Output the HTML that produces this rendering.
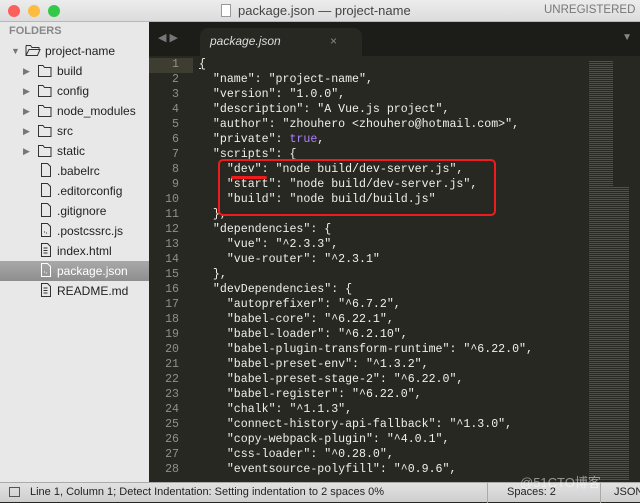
<!DOCTYPE html><html><head><style>
*{margin:0;padding:0;box-sizing:border-box}
body{width:640px;height:502px;overflow:hidden;background:#272822;font-family:"Liberation Sans",sans-serif;position:relative}
#title{position:absolute;left:0;top:0;width:640px;height:22px;background:linear-gradient(#ececec,#dcdcdc);border-bottom:1px solid #b8b8b8}
.dot{position:absolute;top:5px;width:12px;height:12px;border-radius:50%}
#side{position:absolute;left:0;top:22px;width:149px;height:460px;background:#e8e8e8}
.it{position:absolute;font-size:12px;color:#222;height:20px;line-height:20px;white-space:nowrap}
.ic{position:absolute}
.tri{position:absolute;font-size:9px;color:#777}
#tabbar{position:absolute;left:149px;top:22px;width:491px;height:34px;background:#1c1d19}
#tab{position:absolute;left:200px;top:28px;width:162px;height:28px;background:#272822;border-radius:8px 8px 0 0}
#code{position:absolute;left:149px;top:58px;font-family:"Liberation Mono",monospace;font-size:11.6px;color:#f0f0ea}
.ln{position:absolute;left:0;width:30px;text-align:right;color:#8f908a}
.cl{position:absolute;left:50px;white-space:pre}
#status{position:absolute;left:0;top:482px;width:640px;height:20px;background:linear-gradient(#e2e2e2,#cfcfcf);border-top:1px solid #aaa;font-size:11px;color:#222;line-height:19px}
</style></head><body>
<div id="title">
<div class="dot" style="left:8px;background:#fc605c"></div>
<div class="dot" style="left:28px;background:#fdbc40"></div>
<div class="dot" style="left:48px;background:#34c84a"></div>
<div style="position:absolute;left:221px;top:4px;width:10px;height:13px;border:1px solid #999;background:#fff"></div>
<div style="position:absolute;left:238px;top:3px;font-size:13px;color:#444">package.json — project-name</div>
<div style="position:absolute;left:544px;top:4px;font-size:11.5px;color:#777">UNREGISTERED</div>
</div>
<div id="side"></div>
<div style="position:absolute;left:0;top:261px;width:149px;height:20px;background:linear-gradient(#a9a9a9,#8e8e8e)"></div>
<div style="position:absolute;left:0;top:0;width:149px">
<div class="it" style="left:9px;top:21px;font-size:11px;font-weight:bold;color:#888">FOLDERS</div>
<div class="tri" style="left:11px;top:46px">▼</div>
<svg class="ic" style="left:25px;top:44px" width="16" height="13"><path d="M1 1.5h4.5l1.5 2h7v2M1 1.5v10h11.5l2.5-6H4l-3 6" fill="none" stroke="#333"/></svg>
<div class="it" style="left:45px;top:41px">project-name</div>
<div class="tri" style="left:23px;top:66px">▶</div>
<div class="tri" style="left:23px;top:86px">▶</div>
<div class="tri" style="left:23px;top:106px">▶</div>
<div class="tri" style="left:23px;top:126px">▶</div>
<div class="tri" style="left:23px;top:146px">▶</div>
<svg class="ic" style="left:37px;top:64px" width="16" height="100"><g fill="none" stroke="#333"><path d="M1.5 1.5h4.5l1.5 2h6.5v9h-12.5z"/><path transform="translate(0,20)" d="M1.5 1.5h4.5l1.5 2h6.5v9h-12.5z"/><path transform="translate(0,40)" d="M1.5 1.5h4.5l1.5 2h6.5v9h-12.5z"/><path transform="translate(0,60)" d="M1.5 1.5h4.5l1.5 2h6.5v9h-12.5z"/><path transform="translate(0,80)" d="M1.5 1.5h4.5l1.5 2h6.5v9h-12.5z"/></g></svg>
<div class="it" style="left:57px;top:61px">build</div>
<div class="it" style="left:57px;top:81px">config</div>
<div class="it" style="left:57px;top:101px">node_modules</div>
<div class="it" style="left:57px;top:121px">src</div>
<div class="it" style="left:57px;top:141px">static</div>
<svg class="ic" style="left:40px;top:163px" width="12" height="140"><g fill="none" stroke="#333">
<path d="M1.5 .5h6l3 3v10h-9z"/><path transform="translate(0,20)" d="M1.5 .5h6l3 3v10h-9z"/><path transform="translate(0,40)" d="M1.5 .5h6l3 3v10h-9z"/><path transform="translate(0,60)" d="M1.5 .5h6l3 3v10h-9zM4 9h1M6 10h1"/><path transform="translate(0,80)" d="M1.5 .5h6l3 3v10h-9zM3.5 5h4M3.5 7.5h4M3.5 10h4"/><path transform="translate(0,100)" d="M1.5 .5h6l3 3v10h-9zM4 9h1M6 10h1" stroke="#fff"/><path transform="translate(0,120)" d="M1.5 .5h6l3 3v10h-9zM3.5 5h4M3.5 7.5h4M3.5 10h4"/></g></svg>
<div class="it" style="left:57px;top:161px">.babelrc</div>
<div class="it" style="left:57px;top:181px">.editorconfig</div>
<div class="it" style="left:57px;top:201px">.gitignore</div>
<div class="it" style="left:57px;top:221px">.postcssrc.js</div>
<div class="it" style="left:57px;top:241px">index.html</div>
<div class="it" style="left:57px;top:261px;color:#fff">package.json</div>
<div class="it" style="left:57px;top:281px">README.md</div>
</div>
<div id="tabbar"><div style="position:absolute;left:9px;top:9px;color:#777;font-size:11px">◀ ▶</div><div style="position:absolute;right:8px;top:10px;color:#888;font-size:10px">▼</div></div>
<div id="tab"><div style="position:absolute;left:10px;top:6px;font-style:italic;font-size:12px;color:#ddd">package.json</div><div style="position:absolute;left:130px;top:6px;font-size:12px;color:#888">×</div></div>
<div style="position:absolute;left:149px;top:58px;width:44px;height:15px;background:#3e3d32"></div>
<div id="code">
<div class="ln" style="top:0">1</div><div class="cl" style="top:0;text-decoration:underline">{</div>
<div class="ln" style="top:15px">2</div><div class="cl" style="top:15px">  "name": "project-name",</div>
<div class="ln" style="top:30px">3</div><div class="cl" style="top:30px">  "version": "1.0.0",</div>
<div class="ln" style="top:45px">4</div><div class="cl" style="top:45px">  "description": "A Vue.js project",</div>
<div class="ln" style="top:60px">5</div><div class="cl" style="top:60px">  "author": "zhouhero &lt;zhouhero@hotmail.com&gt;",</div>
<div class="ln" style="top:75px">6</div><div class="cl" style="top:75px">  "private": <span style="color:#ae81ff">true</span>,</div>
<div class="ln" style="top:90px">7</div><div class="cl" style="top:90px">  "scripts": {</div>
<div class="ln" style="top:105px">8</div><div class="cl" style="top:105px">    "dev": "node build/dev-server.js",</div>
<div class="ln" style="top:120px">9</div><div class="cl" style="top:120px">    "start": "node build/dev-server.js",</div>
<div class="ln" style="top:135px">10</div><div class="cl" style="top:135px">    "build": "node build/build.js"</div>
<div class="ln" style="top:150px">11</div><div class="cl" style="top:150px">  },</div>
<div class="ln" style="top:165px">12</div><div class="cl" style="top:165px">  "dependencies": {</div>
<div class="ln" style="top:180px">13</div><div class="cl" style="top:180px">    "vue": "^2.3.3",</div>
<div class="ln" style="top:195px">14</div><div class="cl" style="top:195px">    "vue-router": "^2.3.1"</div>
<div class="ln" style="top:210px">15</div><div class="cl" style="top:210px">  },</div>
<div class="ln" style="top:225px">16</div><div class="cl" style="top:225px">  "devDependencies": {</div>
<div class="ln" style="top:240px">17</div><div class="cl" style="top:240px">    "autoprefixer": "^6.7.2",</div>
<div class="ln" style="top:255px">18</div><div class="cl" style="top:255px">    "babel-core": "^6.22.1",</div>
<div class="ln" style="top:270px">19</div><div class="cl" style="top:270px">    "babel-loader": "^6.2.10",</div>
<div class="ln" style="top:285px">20</div><div class="cl" style="top:285px">    "babel-plugin-transform-runtime": "^6.22.0",</div>
<div class="ln" style="top:300px">21</div><div class="cl" style="top:300px">    "babel-preset-env": "^1.3.2",</div>
<div class="ln" style="top:315px">22</div><div class="cl" style="top:315px">    "babel-preset-stage-2": "^6.22.0",</div>
<div class="ln" style="top:330px">23</div><div class="cl" style="top:330px">    "babel-register": "^6.22.0",</div>
<div class="ln" style="top:345px">24</div><div class="cl" style="top:345px">    "chalk": "^1.1.3",</div>
<div class="ln" style="top:360px">25</div><div class="cl" style="top:360px">    "connect-history-api-fallback": "^1.3.0",</div>
<div class="ln" style="top:375px">26</div><div class="cl" style="top:375px">    "copy-webpack-plugin": "^4.0.1",</div>
<div class="ln" style="top:390px">27</div><div class="cl" style="top:390px">    "css-loader": "^0.28.0",</div>
<div class="ln" style="top:405px">28</div><div class="cl" style="top:405px">    "eventsource-polyfill": "^0.9.6",</div>
</div>
<div style="position:absolute;left:589px;top:60px;width:40px;height:420px;background:repeating-linear-gradient(#272822 0,#272822 1px,#6a6a64 1px,#6a6a64 2px);opacity:.6;clip-path:polygon(0 0,60% 0,60% 30%,100% 30%,100% 100%,0 100%)"></div>
<div style="position:absolute;left:218px;top:159px;width:278px;height:57px;border:2.5px solid #ee1c1c;border-radius:5px"></div>
<div style="position:absolute;left:231px;top:176px;width:36px;height:3px;background:#ee1c1c;border-radius:2px"></div>
<div id="status">
<div style="position:absolute;left:9px;top:4px;width:11px;height:10px;border:1px solid #555"></div>
<div style="position:absolute;left:30px;top:0">Line 1, Column 1; Detect Indentation: Setting indentation to 2 spaces 0%</div>
<div style="position:absolute;left:487px;top:0;width:1px;height:20px;background:#aaa"></div>
<div style="position:absolute;left:507px;top:0">Spaces: 2</div>
<div style="position:absolute;left:600px;top:0;width:1px;height:20px;background:#aaa"></div>
<div style="position:absolute;left:614px;top:0">JSON</div>
<div style="position:absolute;left:520px;top:-10px;color:#fff;opacity:.5;font-size:13px">@51CTO博客</div>
</div>
</body></html>
